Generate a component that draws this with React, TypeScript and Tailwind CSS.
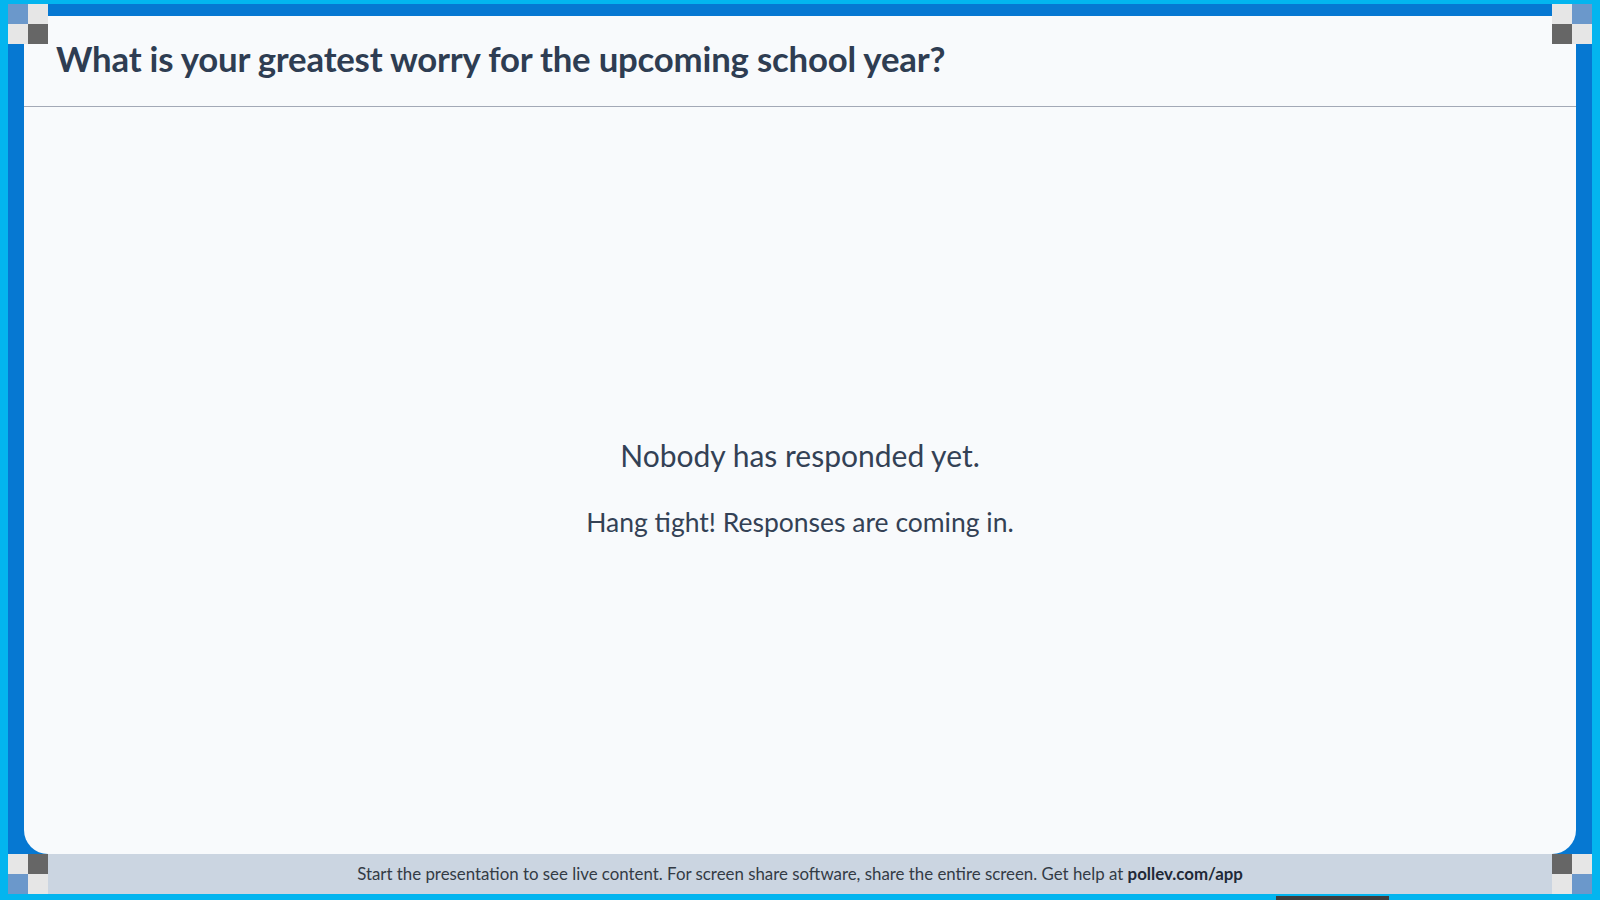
const fontStack = { fontFamily: 'Lato, "Noto Sans", sans-serif' };

function Checker({ flip }: { flip?: boolean }) {
    // 2x2 tile used on the four corners of the frame
    const cells = flip
        ? ['bg-[#e6e6e6]', 'bg-[#6b98cb]', 'bg-[#666666]', 'bg-[#e6e6e6]']
        : ['bg-[#6b98cb]', 'bg-[#e6e6e6]', 'bg-[#e6e6e6]', 'bg-[#666666]'];
    return (
        <div className="grid grid-cols-2 grid-rows-2 w-[40px] h-[40px] shrink-0">
            {cells.map((c, i) => (
                <div key={i} className={c} />
            ))}
        </div>
    );
}

function FooterChecker({ flip }: { flip?: boolean }) {
    const cells = flip
        ? ['bg-[#666666]', 'bg-[#e6e6e6]', 'bg-[#e6e6e6]', 'bg-[#6b98cb]']
        : ['bg-[#e6e6e6]', 'bg-[#666666]', 'bg-[#6b98cb]', 'bg-[#e6e6e6]'];
    return (
        <div className="grid grid-cols-2 grid-rows-2 w-[40px] h-[40px] shrink-0">
            {cells.map((c, i) => (
                <div key={i} className={c} />
            ))}
        </div>
    );
}

export default function App() {
    return (
        <div
            className="w-[1600px] h-[900px] bg-[#03b5ef] pt-[4px] px-[8px] pb-[6px] overflow-hidden relative"
            style={fontStack}
        >
            <div className="relative h-full flex flex-col bg-[#0678d2]">
                {/* Top corner tiles */}
                <div className="absolute top-0 left-0 z-10">
                    <Checker />
                </div>
                <div className="absolute top-0 right-0 z-10">
                    <Checker flip />
                </div>

                {/* Slide panel */}
                <div className="flex-1 mt-[12px] mx-[16px] rounded-[24px] bg-[#f8fafc] flex flex-col min-h-0">
                    <div className="h-[91px] shrink-0 flex items-center pb-[3px] px-[32px] border-b border-[#a3a9b6]">
                        <h1 className="text-[34.75px] font-bold text-[#2e3d52] tracking-[-0.2px]">
                            What is your greatest worry for the upcoming school year?
                        </h1>
                    </div>
                    <div className="flex-1 flex flex-col items-center justify-center pt-[13px] text-[#334155]">
                        <p className="text-[30px] leading-[36px]">Nobody has responded yet.</p>
                        <p className="text-[26.5px] leading-[32px] mt-[33px]">
                            Hang tight! Responses are coming in.
                        </p>
                    </div>
                </div>

                {/* Footer notice */}
                <div className="h-[40px] shrink-0 flex items-center bg-[#cbd5e1]">
                    <FooterChecker />
                    <p className="flex-1 text-center text-[16.85px] text-[#333b45]">
                        Start the presentation to see live content. For screen share software, share the
                        entire screen. Get help at <span className="font-bold text-[#1f2937]">pollev.com/app</span>
                    </p>
                    <FooterChecker flip />
                </div>
            </div>
            <div className="absolute bottom-0 left-[1276px] w-[113px] h-[4px] bg-[#3d3d3d]" />
        </div>
    );
}
